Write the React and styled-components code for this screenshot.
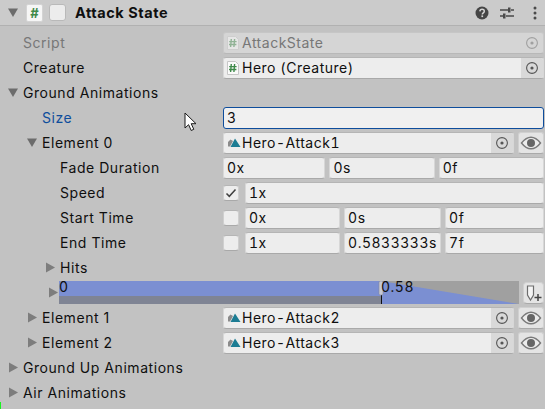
import React from "react";
import styled, { createGlobalStyle } from "styled-components";

const Global = createGlobalStyle`
  html, body {
    margin: 0;
    padding: 0;
    background: #c2c2c2;
  }
  body {
    font-family: Inter, "Liberation Sans", sans-serif;
    font-size: 14px;
    color: #0f0f0f;
  }
`;

const Page = styled.div`
  position: relative;
  width: 545px;
  height: 409px;
  overflow: hidden;
  background: #c2c2c2;
`;

const Header = styled.div`
  display: flex;
  align-items: center;
  height: 25px;
  padding: 0 7px 0 7px;
  background: #cbcbcb;
  border-bottom: 1px solid #b1b1b1;
`;
const HeaderTitle = styled.div`
  margin-left: 9px;
  flex: 1;
  font-size: 14.5px;
  font-weight: 700;
  letter-spacing: 0.55px;
`;
const HeaderTools = styled.div`
  display: flex;
  align-items: center;
  gap: 8px;
`;
const ScriptBadge = styled.div`
  display: flex;
  align-items: center;
  justify-content: center;
  box-sizing: border-box;
  width: 17px;
  height: 18px;
  margin-left: 6px;
  background: #f6f6f6;
  border: 1px solid #d4d4d4;
  border-radius: 2px;
  color: #3f8a4a;
  font-size: 13px;
  font-weight: 700;
`;
const HeaderCheck = styled.div`
  box-sizing: border-box;
  width: 17px;
  height: 17px;
  margin-left: 6px;
  background: #ececec;
  border: 1px solid #b9b9b9;
  border-radius: 3px;
`;

const List = styled.div`
  padding-top: 4px;
`;
const Row = styled.div`
  display: grid;
  grid-template-columns: 223px 1fr;
  align-items: center;
  height: 25px;
  padding-right: 1px;
`;
const LabelCell = styled.div`
  display: flex;
  align-items: center;
  height: 100%;
  padding-left: ${({ $left }) => $left}px;
  position: relative;
  color: ${({ $tone }) =>
    $tone === "muted" ? "#777777" : $tone === "blue" ? "#0e4d9c" : "#0f0f0f"};
  letter-spacing: 0.55px;
  white-space: nowrap;
`;
const ArrowSlot = styled.span`
  position: absolute;
  left: ${({ $left }) => $left - 16}px;
  top: 6px;
  display: flex;
`;
const Controls = styled.div`
  display: flex;
  align-items: center;
  gap: 4px;
  min-width: 0;
`;

const Field = styled.div`
  display: flex;
  align-items: center;
  box-sizing: border-box;
  flex: ${({ $grow }) => $grow ?? 1} 1 0;
  min-width: 0;
  height: 22px;
  padding-left: 3px;
  background: ${({ $disabled }) => ($disabled ? "#d5d5d5" : "#ededed")};
  border: 1px solid ${({ $disabled }) => ($disabled ? "#c8c8c8" : "#d7d7d7")};
  border-top-color: ${({ $disabled }) => ($disabled ? "#c6c6c6" : "#b5b5b5")};
  border-bottom-color: ${({ $disabled }) => ($disabled ? "#b8b8b8" : "#a9a9a9")};
  border-radius: 3px;
  color: ${({ $disabled }) => ($disabled ? "#777777" : "#0f0f0f")};
  font-variant-numeric: tabular-nums;
  letter-spacing: 0.5px;
  white-space: nowrap;
  overflow: hidden;
`;
const FocusField = styled(Field)`
  background: #f0f0f0;
  border: 1px solid #0e4d9c;
`;
const FieldText = styled.span`
  flex: 1;
  margin-left: 1px;
`;
const PickButton = styled.div`
  display: flex;
  align-items: center;
  justify-content: center;
  align-self: stretch;
  width: 22px;
  background: ${({ $plain }) => ($plain ? "transparent" : "#d9d9d9")};
  border-radius: 0 2px 2px 0;
`;
const CheckBox = styled.div`
  display: flex;
  align-items: center;
  justify-content: center;
  box-sizing: border-box;
  flex: none;
  width: 16px;
  height: 16px;
  margin-right: 2px;
  background: #ededed;
  border: 1px solid #cfcfcf;
  border-top-color: #b5b5b5;
  border-bottom-color: #a9a9a9;
  border-radius: 3px;
`;
const EyeButton = styled.div`
  display: flex;
  align-items: center;
  justify-content: center;
  box-sizing: border-box;
  flex: none;
  width: 26px;
  height: 22px;
  background: #e4e4e4;
  border: 1px solid #d0d0d0;
  border-bottom-color: #a9a9a9;
  border-radius: 3px;
`;

const TimelineRow = styled.div`
  display: flex;
  align-items: center;
  height: 25px;
  padding-left: 47px;
  padding-right: 1px;
`;
const Timeline = styled.div`
  position: relative;
  width: 460px;
  height: 23px;
  margin-left: -1px;
  flex: none;
`;
const TimelineText = styled.span`
  position: absolute;
  left: ${({ $left }) => $left}px;
  top: -2px;
  color: #0f0f0f;
  font-variant-numeric: tabular-nums;
  letter-spacing: 0.5px;
  line-height: 16px;
`;
const AddButton = styled.div`
  display: flex;
  align-items: center;
  justify-content: center;
  box-sizing: border-box;
  width: 21px;
  height: 22px;
  margin-left: 4px;
  background: #e4e4e4;
  border: 1px solid #d0d0d0;
  border-bottom-color: #a9a9a9;
  border-radius: 4px;
`;

const Cursor = styled.svg`
  position: absolute;
  left: 184px;
  top: 112px;
`;
const GreenMark = styled.div`
  position: absolute;
  left: 0;
  bottom: 0;
  width: 1px;
  height: 7px;
  background: #19f51f;
`;

const Arrow = ({ open }) => (
  <svg width="13" height="13" viewBox="0 0 13 13" style={{ flex: "none" }}>
    {open ? (
      <path d="M1 2.5h10L6 11z" fill="#6c6c6c" />
    ) : (
      <path d="M2 1.5v10L11 6.5z" fill="#7d7d7d" />
    )}
  </svg>
);

const Target = ({ faint }) => (
  <svg width="14" height="14" viewBox="0 0 14 14">
    <circle cx="7" cy="7" r="5.4" fill="none" stroke={faint ? "#a0a0a0" : "#555555"} strokeWidth="1.1" />
    <circle cx="7" cy="7" r="1.6" fill={faint ? "#a0a0a0" : "#555555"} />
  </svg>
);

const Eye = () => (
  <svg width="22" height="14" viewBox="0 0 22 14">
    <path d="M1.5 7C5 2.4 8 1.2 11 1.2S17 2.4 20.5 7C17 11.6 14 12.8 11 12.8S5 11.6 1.5 7z" fill="#ececec" stroke="#7a7a7a" strokeWidth="1.4" />
    <circle cx="11" cy="7" r="4" fill="#666666" />
  </svg>
);

const ScriptIcon = ({ faint }) => (
  <svg width="12" height="14" viewBox="0 0 12 14" style={{ flex: "none", marginRight: 2, opacity: faint ? 0.45 : 1 }}>
    <path d="M.5.5h8l3 3v10H.5z" fill="#fafafa" stroke="#c6c6c6" />
    <path d="M4.3 3 3.6 11M7.6 3 6.9 11M2.2 5.6h7.4M2 8.5h7.4" stroke="#3f8a4a" strokeWidth="1.4" fill="none" />
  </svg>
);

const MeshIcon = () => (
  <svg width="14" height="12" viewBox="0 0 14 12" style={{ flex: "none" }}>
    <path d="M1 5l2.5-2.5L6 4 3 9.5H1z" fill="#8b8b8b" />
    <path d="M8 1.5 13.5 10h-10z" fill="#1c7c93" />
  </svg>
);

const ObjectField = ({ icon, text, disabled, plain }) => (
  <Field $disabled={disabled}>
    {icon === "script" ? <ScriptIcon faint={disabled} /> : <MeshIcon />}
    <FieldText>{text}</FieldText>
    <PickButton $plain={plain}>
      <Target faint={disabled} />
    </PickButton>
  </Field>
);

const Label = ({ left, arrow, tone, children }) => (
  <LabelCell $left={left} $tone={tone}>
    {arrow && (
      <ArrowSlot $left={left}>
        <Arrow open={arrow === "open"} />
      </ArrowSlot>
    )}
    {children}
  </LabelCell>
);

const TimelineGraph = () => (
  <svg width="460" height="23" viewBox="0 0 460 23" style={{ display: "block" }}>
    <rect x="0" y="0" width="460" height="23" fill="#a0a0a0" />
    <rect x="0" y="0" width="322" height="15" fill="#7b8fd2" />
    <rect x="0" y="15" width="322" height="8" fill="#7f8494" />
    <path d="M322 0 460 23H322z" fill="#7b8fd2" />
    <rect x="322" y="13" width="1" height="10" fill="#101010" />
    <rect x="320" y="0" width="4" height="14" rx="1.5" fill="#c6c9d4" stroke="#8a8a98" strokeWidth="0.6" />
  </svg>
);

const AddIcon = () => (
  <svg width="17" height="18" viewBox="0 0 17 18">
    <path d="M2.5 2h6v9l-3 5-3-5z" fill="#f5f5f5" stroke="#6d6d6d" strokeWidth="1.2" />
    <path d="M9.5 13.5h7M13 10v7" stroke="#444444" strokeWidth="1.5" />
  </svg>
);

export default function App() {
  return (
    <Page>
      <Global />
      <Header>
        <Arrow open />
        <ScriptBadge>#</ScriptBadge>
        <HeaderCheck />
        <HeaderTitle>Attack State</HeaderTitle>
        <HeaderTools>
          <svg width="14" height="14" viewBox="0 0 14 14">
            <circle cx="7" cy="7" r="6.5" fill="#454545" />
            <path d="M4.9 5.4C5 3.9 6 3.3 7.1 3.3c1.3 0 2.2.8 2.2 1.9 0 1.6-2 1.6-2 3.2" fill="none" stroke="#d4d4d4" strokeWidth="1.5" />
            <rect x="6.4" y="9.4" width="1.7" height="1.7" fill="#d4d4d4" />
          </svg>
          <svg width="16" height="14" viewBox="0 0 16 14" style={{ marginLeft: 2 }}>
            <path d="M1 4h8M12 4h3M1 10h3M7 10h8" stroke="#4a4a4a" strokeWidth="1.4" />
            <rect x="9" y="1.5" width="2.5" height="5" fill="#4a4a4a" />
            <rect x="4" y="7.5" width="2.5" height="5" fill="#4a4a4a" />
          </svg>
          <svg width="6" height="14" viewBox="0 0 6 14" style={{ marginLeft: 9 }}>
            <circle cx="3" cy="2" r="1.5" fill="#4a4a4a" />
            <circle cx="3" cy="7" r="1.5" fill="#4a4a4a" />
            <circle cx="3" cy="12" r="1.5" fill="#4a4a4a" />
          </svg>
        </HeaderTools>
      </Header>

      <List>
        <Row>
          <Label left={23} tone="muted">Script</Label>
          <Controls><ObjectField icon="script" text="AttackState" disabled plain /></Controls>
        </Row>
        <Row>
          <Label left={23}>Creature</Label>
          <Controls><ObjectField icon="script" text="Hero (Creature)" /></Controls>
        </Row>
        <Row>
          <Label left={23} arrow="open">Ground Animations</Label>
        </Row>
        <Row>
          <Label left={42} tone="blue">Size</Label>
          <Controls><FocusField>3</FocusField></Controls>
        </Row>
        <Row>
          <Label left={42} arrow="open">Element 0</Label>
          <Controls>
            <ObjectField icon="mesh" text="Hero-Attack1" />
            <EyeButton><Eye /></EyeButton>
          </Controls>
        </Row>
        <Row>
          <Label left={60}>Fade Duration</Label>
          <Controls>
            <Field $grow={102}>0x</Field>
            <Field $grow={105}>0s</Field>
            <Field $grow={105}>0f</Field>
          </Controls>
        </Row>
        <Row>
          <Label left={60}>Speed</Label>
          <Controls>
            <CheckBox>
              <svg width="12" height="10" viewBox="0 0 12 10">
                <path d="M1.5 5.5 4.3 8.3 10.5 1.5" fill="none" stroke="#404040" strokeWidth="1.5" />
              </svg>
            </CheckBox>
            <Field>1x</Field>
          </Controls>
        </Row>
        <Row>
          <Label left={60}>Start Time</Label>
          <Controls>
            <CheckBox />
            <Field $grow={95}>0x</Field>
            <Field $grow={97}>0s</Field>
            <Field $grow={99}>0f</Field>
          </Controls>
        </Row>
        <Row>
          <Label left={60}>End Time</Label>
          <Controls>
            <CheckBox />
            <Field $grow={95}>1x</Field>
            <Field $grow={97}>0.5833333s</Field>
            <Field $grow={99}>7f</Field>
          </Controls>
        </Row>
        <Row>
          <Label left={60} arrow="closed">Hits</Label>
        </Row>
        <TimelineRow>
          <Arrow />
          <Timeline>
            <TimelineGraph />
            <TimelineText $left={0}>0</TimelineText>
            <TimelineText $left={322}>0.58</TimelineText>
          </Timeline>
          <AddButton><AddIcon /></AddButton>
        </TimelineRow>
        <Row>
          <Label left={42} arrow="closed">Element 1</Label>
          <Controls>
            <ObjectField icon="mesh" text="Hero-Attack2" />
            <EyeButton><Eye /></EyeButton>
          </Controls>
        </Row>
        <Row>
          <Label left={42} arrow="closed">Element 2</Label>
          <Controls>
            <ObjectField icon="mesh" text="Hero-Attack3" />
            <EyeButton><Eye /></EyeButton>
          </Controls>
        </Row>
        <Row>
          <Label left={23} arrow="closed">Ground Up Animations</Label>
        </Row>
        <Row>
          <Label left={23} arrow="closed">Air Animations</Label>
        </Row>
      </List>

      <Cursor width="13" height="20" viewBox="0 0 13 20">
        <path d="M1 1v15l3.6-3.3 2.6 5.8 2.6-1.2-2.6-5.6H12z" fill="#ffffff" stroke="#1a1a1a" strokeWidth="1" />
      </Cursor>
      <GreenMark />
    </Page>
  );
}
